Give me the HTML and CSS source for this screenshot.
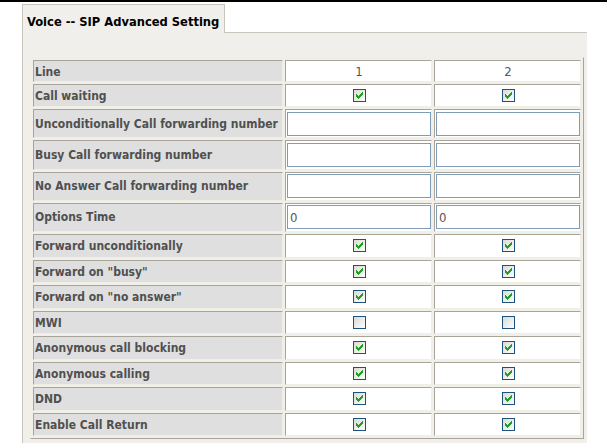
FILE: index.html
```html
<!DOCTYPE html>
<html>
<head>
<meta charset="utf-8">
<title>Voice -- SIP Advanced Setting</title>
<link rel="stylesheet" href="styles.css">
</head>
<body>
<div class="topbar"></div>
<div class="page">
  <div class="tabs">
    <div class="tab">Voice -- SIP Advanced Setting</div>
    <div class="tabfill"></div>
  </div>
  <div class="panel">
    <table class="grid">
      <tr class="r-line"><th>Line</th><td class="num">1</td><td class="num">2</td></tr>
      <tr class="r-first"><th>Call waiting</th>
        <td><span class="cb on"><svg width="13" height="13" viewBox="0 0 13 13"><use href="#box"/><use href="#tick"/></svg></span></td>
        <td><span class="cb on"><svg width="13" height="13" viewBox="0 0 13 13"><use href="#box"/><use href="#tick"/></svg></span></td></tr>
      <tr class="r-text"><th>Unconditionally Call forwarding number</th>
        <td><input class="field" type="text" value=""></td><td><input class="field" type="text" value=""></td></tr>
      <tr class="r-text"><th>Busy Call forwarding number</th>
        <td><input class="field" type="text" value=""></td><td><input class="field" type="text" value=""></td></tr>
      <tr class="r-text"><th>No Answer Call forwarding number</th>
        <td><input class="field" type="text" value=""></td><td><input class="field" type="text" value=""></td></tr>
      <tr class="r-text"><th>Options Time</th>
        <td><input class="field" type="text" value="0"></td><td><input class="field" type="text" value="0"></td></tr>
      <tr class="r-chk"><th>Forward unconditionally</th>
        <td><span class="cb"><svg width="13" height="13" viewBox="0 0 13 13"><use href="#box"/><use href="#tick"/></svg></span></td>
        <td><span class="cb"><svg width="13" height="13" viewBox="0 0 13 13"><use href="#box"/><use href="#tick"/></svg></span></td></tr>
      <tr class="r-chk"><th>Forward on "busy"</th>
        <td><span class="cb"><svg width="13" height="13" viewBox="0 0 13 13"><use href="#box"/><use href="#tick"/></svg></span></td>
        <td><span class="cb"><svg width="13" height="13" viewBox="0 0 13 13"><use href="#box"/><use href="#tick"/></svg></span></td></tr>
      <tr class="r-chk"><th>Forward on "no answer"</th>
        <td><span class="cb"><svg width="13" height="13" viewBox="0 0 13 13"><use href="#box"/><use href="#tick"/></svg></span></td>
        <td><span class="cb"><svg width="13" height="13" viewBox="0 0 13 13"><use href="#box"/><use href="#tick"/></svg></span></td></tr>
      <tr class="r-chk"><th>MWI</th>
        <td><span class="cb"><svg width="13" height="13" viewBox="0 0 13 13"><use href="#box"/></svg></span></td>
        <td><span class="cb"><svg width="13" height="13" viewBox="0 0 13 13"><use href="#box"/></svg></span></td></tr>
      <tr class="r-chk"><th>Anonymous call blocking</th>
        <td><span class="cb"><svg width="13" height="13" viewBox="0 0 13 13"><use href="#box"/><use href="#tick"/></svg></span></td>
        <td><span class="cb"><svg width="13" height="13" viewBox="0 0 13 13"><use href="#box"/><use href="#tick"/></svg></span></td></tr>
      <tr class="r-chk"><th>Anonymous calling</th>
        <td><span class="cb"><svg width="13" height="13" viewBox="0 0 13 13"><use href="#box"/><use href="#tick"/></svg></span></td>
        <td><span class="cb"><svg width="13" height="13" viewBox="0 0 13 13"><use href="#box"/><use href="#tick"/></svg></span></td></tr>
      <tr class="r-chk"><th>DND</th>
        <td><span class="cb"><svg width="13" height="13" viewBox="0 0 13 13"><use href="#box"/><use href="#tick"/></svg></span></td>
        <td><span class="cb"><svg width="13" height="13" viewBox="0 0 13 13"><use href="#box"/><use href="#tick"/></svg></span></td></tr>
      <tr class="r-chk"><th>Enable Call Return</th>
        <td><span class="cb"><svg width="13" height="13" viewBox="0 0 13 13"><use href="#box"/><use href="#tick"/></svg></span></td>
        <td><span class="cb"><svg width="13" height="13" viewBox="0 0 13 13"><use href="#box"/><use href="#tick"/></svg></span></td></tr>
    </table>
  </div>
</div>
<svg class="defs" width="0" height="0" aria-hidden="true">
  <defs>
    <linearGradient id="cbg" x1="0" y1="0" x2="1" y2="1">
      <stop offset="0" stop-color="#d8d8d2"/>
      <stop offset="1" stop-color="#ffffff"/>
    </linearGradient>
    <g id="box">
      <rect x="0.5" y="0.5" width="12" height="12" fill="url(#cbg)" stroke="#1c5180"/>
    </g>
    <g id="tick" fill="#21a121" shape-rendering="crispEdges">
      <rect x="3" y="5" width="1" height="3"/>
      <rect x="4" y="6" width="1" height="3"/>
      <rect x="5" y="7" width="1" height="3"/>
      <rect x="6" y="6" width="1" height="3"/>
      <rect x="7" y="5" width="1" height="3"/>
      <rect x="8" y="4" width="1" height="3"/>
      <rect x="9" y="3" width="1" height="3"/>
    </g>
  </defs>
</svg>
</body>
</html>
```
FILE: styles.css
```css
html, body {
  margin: 0;
  padding: 0;
  background: #ffffff;
}
body {
  font-family: "DejaVu Sans Condensed", "DejaVu Sans", sans-serif;
  font-stretch: condensed;
  color: #555555;
  overflow: hidden;
}
.topbar {
  height: 2px;
  background: #000000;
}
.page {
  margin: 2px 0 0 22px;
  width: 565px;
}
.tabs {
  display: flex;
  height: 29px;
}
.tab {
  box-sizing: border-box;
  width: 203px;
  height: 29px;
  border: 1px solid #c9c5bc;
  border-bottom: 0;
  background: #f0efeb;
  color: #000000;
  font-weight: bold;
  font-size: 12.8px;
  line-height: 16px;
  padding: 9px 0 0 4px;
  white-space: nowrap;
}
.tabfill {
  flex: 1;
  border-bottom: 1px solid #c9c5bc;
}
.panel {
  background: #f0efeb;
  border-left: 1px solid #c9c5bc;
  padding: 24px 0 20px 7px;
}
.grid {
  table-layout: fixed;
  width: 554px;
  border-collapse: separate;
  border-spacing: 2px;
  border: 1px solid;
  border-color: #f1efe2 #a8a498 #a8a498 #f1efe2;
}
.grid th,
.grid td {
  border: 1px solid;
  border-color: #a8a498 #f1efe2 #f1efe2 #a8a498;
  vertical-align: middle;
  padding-top: 0;
  padding-bottom: 0;
  overflow: hidden;
}
.grid th {
  width: 246px;
  padding-left: 1px;
  padding-right: 1px;
  background: #dfdfdf;
  text-align: left;
  font-size: 12px;
  font-weight: bold;
  color: #505050;
  white-space: nowrap;
}
.grid td {
  width: 144px;
  padding-left: 1px;
  padding-right: 0;
  background: #ffffff;
  text-align: center;
  font-size: 13px;
}
.r-line th, .r-line td { height: 20px; }
.r-first th, .r-first td { height: 21px; }
.r-text th, .r-text td { height: 27.25px; }
.r-chk th, .r-chk td { height: 21.5px; }
.r-line th, .r-first th, .r-chk th { padding-top: 1px; }
.r-chk th { height: 20.5px; }
.r-first th { height: 20px; }
.r-line th { height: 19px; }
.num {
  color: #555555;
}
.cb {
  display: block;
  width: 13px;
  height: 13px;
  margin: 0 auto;
}
.cb svg {
  display: block;
}
.field {
  display: block;
  box-sizing: border-box;
  width: 144px;
  height: 24px;
  margin: 0;
  padding: 0 2px;
  border: 1px solid #7f9db9;
  background: #ffffff;
  font-family: "DejaVu Sans Condensed", "DejaVu Sans", sans-serif;
  font-stretch: condensed;
  font-size: 13px;
  color: #555555;
  outline: none;
}
.defs {
  position: absolute;
  width: 0;
  height: 0;
  overflow: hidden;
}
```
